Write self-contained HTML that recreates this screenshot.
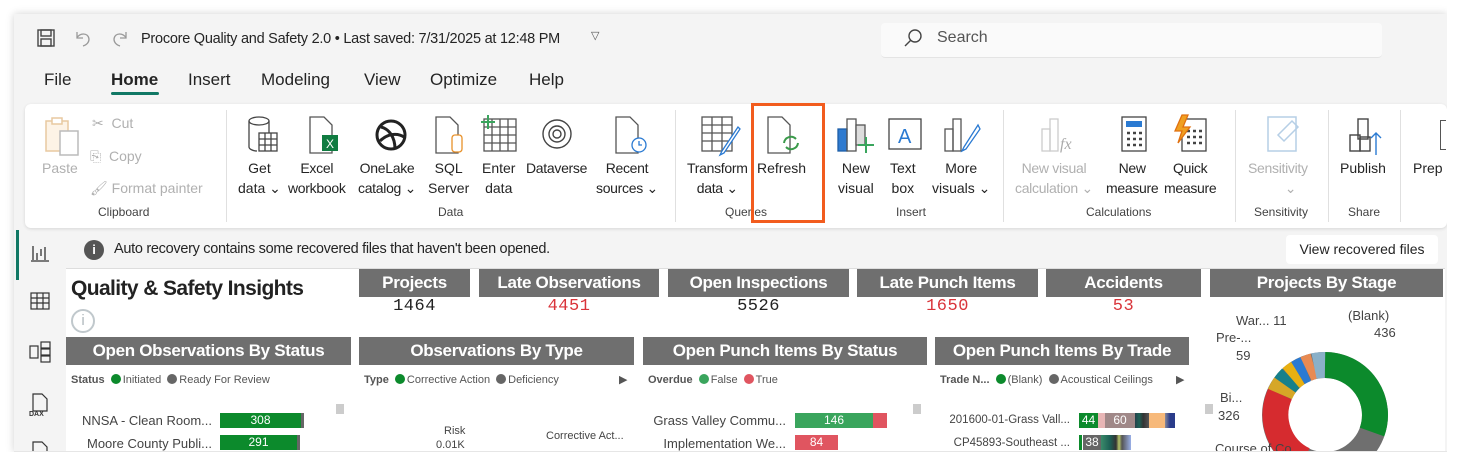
<!DOCTYPE html>
<html><head><meta charset="utf-8"><style>
*{margin:0;padding:0;box-sizing:border-box}
html,body{overflow:hidden}
body{width:1462px;height:466px;background:#fff;font-family:"Liberation Sans",sans-serif;position:relative;color:#242424}
.a{position:absolute}
.win{left:14px;top:14px;width:1433px;height:438px;background:#f4f4f4;box-shadow:0 0 8px rgba(0,0,0,.18);overflow:hidden}
.t{position:absolute;white-space:nowrap}
.rb{font-size:14px;color:#242424;text-align:center;line-height:20px}
.dis{color:#b0b0b0}
.grp{font-size:12px;color:#424242;text-align:center}
.sep{position:absolute;top:110px;width:1px;height:112px;background:#e0e0e0}
.hd{position:absolute;background:#6f6f6f;color:#fff;font-weight:bold;font-size:17px;text-align:center;line-height:28px;height:28px;letter-spacing:-.3px}
.num{position:absolute;font-size:17px;text-align:center;font-family:"Liberation Mono",monospace;letter-spacing:.5px}
.lg{font-size:11px;color:#555}
.dot{display:inline-block;width:10px;height:10px;border-radius:50%;vertical-align:-1px;margin:0 2px 0 3px}
.lbl{font-size:13px;color:#444;text-align:right}
.bar{position:absolute;height:15px;color:#fff;font-size:12px;text-align:center;line-height:15px}
</style></head><body>
<div class="a win"></div>
<svg class="a" style="left:36px;top:28px" width="20" height="20" viewBox="0 0 20 20" fill="none" stroke="#444" stroke-width="1.4"><rect x="2" y="2" width="16" height="16"/><rect x="5" y="2" width="10" height="6"/><rect x="5" y="11" width="10" height="7"/></svg>
<svg class="a" style="left:73px;top:28px" width="20" height="20" viewBox="0 0 20 20" fill="none" stroke="#999" stroke-width="1.3"><path d="M4 4v6h6M4 10c2-5 11-6 12 1 0 4-3 6-6 7"/></svg>
<svg class="a" style="left:110px;top:28px" width="20" height="20" viewBox="0 0 20 20" fill="none" stroke="#999" stroke-width="1.3"><path d="M16 4v6h-6M16 10c-2-5-11-6-12 1 0 4 3 6 6 7"/></svg>
<div class="t" style="left:141px;top:31px;font-size:14.5px;letter-spacing:-.25px">Procore Quality and Safety 2.0 • Last saved: 7/31/2025 at 12:48 PM</div>
<div class="t" style="left:591px;top:29px;font-size:11px;color:#555">▽</div>
<div class="a" style="left:881px;top:23px;width:501px;height:35px;background:#fafafa;border-radius:4px;border-bottom:1px solid #e4e4e4"></div>
<svg class="a" style="left:902px;top:27px" width="22" height="22" viewBox="0 0 22 22" fill="none" stroke="#444" stroke-width="1.4"><circle cx="13" cy="9" r="6"/><path d="M9 13l-6 6"/></svg>
<div class="t" style="left:937px;top:29px;font-size:16px;color:#555">Search</div>
<div class="t" style="left:44px;top:70px;font-size:17px">File</div>
<div class="t" style="left:111px;top:70px;font-size:17px;font-weight:bold;color:#242424">Home</div>
<div class="a" style="left:111px;top:92px;width:48px;height:3px;background:#117865;border-radius:2px"></div>
<div class="t" style="left:188px;top:70px;font-size:17px">Insert</div>
<div class="t" style="left:261px;top:70px;font-size:17px">Modeling</div>
<div class="t" style="left:364px;top:70px;font-size:17px">View</div>
<div class="t" style="left:430px;top:70px;font-size:17px">Optimize</div>
<div class="t" style="left:529px;top:70px;font-size:17px">Help</div>
<div class="a" style="left:25px;top:104px;width:1422px;height:124px;background:#fff;border-radius:6px;box-shadow:0 1px 3px rgba(0,0,0,.12)"></div>
<div class="sep" style="left:226px"></div><div class="sep" style="left:675px"></div><div class="sep" style="left:1003px"></div><div class="sep" style="left:1235px"></div><div class="sep" style="left:1328px"></div><div class="sep" style="left:1400px"></div>
<svg class="a" style="left:42px;top:115px" width="40" height="42" viewBox="0 0 40 42" fill="none" stroke="#e8c9a0" stroke-width="1.5"><rect x="4" y="6" width="22" height="30" fill="#fdf3e6"/><rect x="10" y="3" width="10" height="6" fill="#fff"/><rect x="18" y="16" width="18" height="24" fill="#fff" stroke="#bbb"/></svg>
<div class="t rb dis" style="left:42px;top:158px">Paste</div>
<div class="t" style="left:92px;top:115px;font-size:14px;color:#b0b0b0">✂ &nbsp;Cut</div>
<div class="t" style="left:90px;top:148px;font-size:14px;color:#b0b0b0">⎘ &nbsp;Copy</div>
<div class="t" style="left:90px;top:180px;font-size:14px;color:#b0b0b0">🖌 Format painter</div>
<div class="t grp" style="left:98px;top:205px">Clipboard</div>
<svg class="a" style="left:245px;top:115px" width="36" height="40" viewBox="0 0 36 40" fill="none" stroke="#444" stroke-width="1.3"><ellipse cx="14" cy="6" rx="10" ry="4"/><path d="M4 6v26c0 2 4 4 8 4M24 6v12"/><rect x="14" y="18" width="18" height="18" fill="#fff"/><path d="M14 24h18M14 30h18M20 18v18M26 18v18"/></svg>
<svg class="a" style="left:306px;top:115px" width="36" height="40" viewBox="0 0 36 40" fill="none" stroke="#555" stroke-width="1.3"><path d="M4 2h14l8 8v28H4z"/><rect x="16" y="20" width="16" height="16" fill="#107c41" stroke="none"/><text x="20" y="33" fill="#fff" font-size="12" font-family="Liberation Sans" stroke="none">X</text></svg>
<svg class="a" style="left:372px;top:115px" width="38" height="40" viewBox="0 0 38 40" fill="none" stroke="#222" stroke-width="3"><circle cx="19" cy="20" r="14"/><path d="M9 12c8 2 14 10 14 22M8 26c8-8 18-8 24-4"/></svg>
<svg class="a" style="left:432px;top:115px" width="38" height="40" viewBox="0 0 38 40" fill="none" stroke="#555" stroke-width="1.3"><path d="M4 2h14l8 8v28H4z"/><rect x="20" y="20" width="10" height="17" rx="3" fill="#fff" stroke="#e8912a"/></svg>
<svg class="a" style="left:480px;top:113px" width="38" height="42" viewBox="0 0 38 42" fill="none" stroke="#555" stroke-width="1.3"><rect x="4" y="6" width="32" height="32"/><path d="M4 14h32M4 22h32M4 30h32M12 6v32M20 6v32M28 6v32"/><path d="M8 2v14M1 9h14" stroke="#3aa55d" stroke-width="2"/></svg>
<svg class="a" style="left:538px;top:115px" width="38" height="38" viewBox="0 0 38 38" fill="none" stroke="#444" stroke-width="1.4"><circle cx="19" cy="19" r="14"/><circle cx="19" cy="19" r="8"/><circle cx="19" cy="19" r="4"/></svg>
<svg class="a" style="left:612px;top:115px" width="38" height="40" viewBox="0 0 38 40" fill="none" stroke="#555" stroke-width="1.3"><path d="M4 2h14l8 8v28H4z"/><circle cx="27" cy="30" r="7" fill="#fff" stroke="#2a7ad2"/><path d="M27 26v4h3" stroke="#2a7ad2"/></svg>
<div class="t rb" style="left:238px;top:158px">Get<br>data ⌄</div>
<div class="t rb" style="left:288px;top:158px;letter-spacing:-.3px">Excel<br>workbook</div>
<div class="t rb" style="left:358px;top:158px;letter-spacing:-.3px">OneLake<br>catalog ⌄</div>
<div class="t rb" style="left:428px;top:158px">SQL<br>Server</div>
<div class="t rb" style="left:482px;top:158px">Enter<br>data</div>
<div class="t rb" style="left:526px;top:158px;letter-spacing:-.3px">Dataverse</div>
<div class="t rb" style="left:596px;top:158px;letter-spacing:-.3px">Recent<br>sources ⌄</div>
<div class="t grp" style="left:438px;top:205px">Data</div>
<svg class="a" style="left:700px;top:115px" width="42" height="42" viewBox="0 0 42 42" fill="none" stroke="#555" stroke-width="1.3"><rect x="2" y="2" width="30" height="34"/><path d="M2 10h30M2 18h30M2 26h30M12 2v34M22 2v34"/><path d="M38 12L22 36l-2 4 4-2 16-24z" fill="#fff" stroke="#2a7ad2"/></svg>
<svg class="a" style="left:764px;top:115px" width="40" height="40" viewBox="0 0 40 40" fill="none" stroke="#555" stroke-width="1.3"><path d="M4 2h14l8 8v28H4z"/><path d="M20 28a7 7 0 0 1 12-4M34 28a7 7 0 0 1-12 4" stroke="#3a9a4a" stroke-width="2"/></svg>
<div class="t rb" style="left:687px;top:158px;letter-spacing:-.3px">Transform<br>data ⌄</div>
<div class="t rb" style="left:757px;top:158px">Refresh</div>
<div class="t grp" style="left:725px;top:205px">Queries</div>
<div class="a" style="left:751px;top:103px;width:74px;height:120px;border:3px solid #f25c1e"></div>
<svg class="a" style="left:836px;top:115px" width="40" height="40" viewBox="0 0 40 40" fill="none" stroke="#555" stroke-width="1.3"><rect x="2" y="14" width="9" height="22" fill="#2f7bd0" stroke="#1d5fa8"/><rect x="11" y="4" width="9" height="32"/><rect x="20" y="10" width="9" height="20" fill="#ddd"/><path d="M30 22v16M22 30h16" stroke="#3aa55d" stroke-width="2"/></svg>
<svg class="a" style="left:886px;top:115px" width="40" height="40" viewBox="0 0 40 40" fill="none"><rect x="3" y="4" width="32" height="30" stroke="#444" stroke-width="1.3"/><text x="12" y="28" fill="#2a7ad2" font-size="20" font-family="Liberation Sans">A</text></svg>
<svg class="a" style="left:942px;top:115px" width="40" height="40" viewBox="0 0 40 40" fill="none" stroke="#555" stroke-width="1.3"><rect x="3" y="14" width="8" height="22"/><rect x="11" y="4" width="8" height="32"/><path d="M36 10L22 32l-2 4 4-2 14-20z" fill="#fff" stroke="#2a7ad2"/></svg>
<div class="t rb" style="left:838px;top:158px">New<br>visual</div>
<div class="t rb" style="left:890px;top:158px">Text<br>box</div>
<div class="t rb" style="left:932px;top:158px">More<br>visuals ⌄</div>
<div class="t grp" style="left:896px;top:205px">Insert</div>
<svg class="a" style="left:1040px;top:115px" width="40" height="40" viewBox="0 0 40 40" fill="none" stroke="#ccc" stroke-width="1.3"><rect x="2" y="14" width="8" height="22"/><rect x="10" y="4" width="8" height="32"/><text x="20" y="34" fill="#aaa" stroke="none" font-size="16" font-style="italic" font-family="Liberation Serif">fx</text></svg>
<svg class="a" style="left:1118px;top:115px" width="32" height="40" viewBox="0 0 32 40" fill="none" stroke="#444" stroke-width="1.3"><rect x="4" y="2" width="24" height="34"/><rect x="8" y="6" width="16" height="6" fill="#2a7ad2" stroke="none"/><path d="M9 18h3M15 18h3M21 18h3M9 24h3M15 24h3M21 24h3M9 30h3M15 30h3M21 30h3" stroke-width="2.5"/></svg>
<svg class="a" style="left:1172px;top:113px" width="38" height="42" viewBox="0 0 38 42" fill="none" stroke="#444" stroke-width="1.3"><rect x="10" y="6" width="24" height="32"/><path d="M15 18h3M21 18h3M27 18h3M15 24h3M21 24h3M27 24h3M15 30h3M21 30h3M27 30h3" stroke-width="2.5"/><path d="M10 2L3 18h7l-4 12 12-16h-7l5-12z" fill="#f0a020" stroke="#e07010"/></svg>
<div class="t rb dis" style="left:1015px;top:158px;letter-spacing:-.3px">New visual<br>calculation ⌄</div>
<div class="t rb" style="left:1106px;top:158px;letter-spacing:-.3px">New<br>measure</div>
<div class="t rb" style="left:1164px;top:158px;letter-spacing:-.3px">Quick<br>measure</div>
<div class="t grp" style="left:1086px;top:205px">Calculations</div>
<svg class="a" style="left:1264px;top:113px" width="40" height="42" viewBox="0 0 40 42" fill="none" stroke="#b6cfe6" stroke-width="1.5"><rect x="4" y="4" width="28" height="34"/><path d="M14 22l14-14 6 6-14 14z"/></svg>
<div class="t rb dis" style="left:1248px;top:158px;letter-spacing:-.3px">Sensitivity<br>&nbsp;&nbsp;&nbsp;&nbsp;&nbsp;&nbsp;&nbsp;⌄</div>
<div class="t grp" style="left:1254px;top:205px">Sensitivity</div>
<svg class="a" style="left:1346px;top:115px" width="40" height="42" viewBox="0 0 40 42" fill="none" stroke="#444" stroke-width="1.4"><rect x="4" y="20" width="10" height="16"/><rect x="12" y="4" width="10" height="20"/><rect x="14" y="22" width="10" height="14"/><path d="M30 40V18M25 23l5-5 5 5" stroke="#2a7ad2"/></svg>
<div class="t rb" style="left:1340px;top:158px">Publish</div>
<div class="t grp" style="left:1348px;top:205px">Share</div>
<div class="t rb" style="left:1413px;top:158px">Prep</div>
<div class="a" style="left:1440px;top:120px;width:6px;height:30px;border:1.3px solid #555;border-right:none"></div>
<div class="a" style="left:16px;top:230px;width:3px;height:50px;background:#117865"></div>
<svg class="a" style="left:30px;top:244px" width="20" height="18" viewBox="0 0 20 18" fill="none" stroke="#333" stroke-width="1.3"><path d="M1 17h18M3 2v14M7 9v7M11 5v7M15 3v13"/></svg>
<svg class="a" style="left:30px;top:292px" width="20" height="18" viewBox="0 0 20 18" fill="none" stroke="#333" stroke-width="1.2"><rect x="1" y="1" width="18" height="16"/><path d="M1 6h18M1 11h18M7 1v16M13 1v16"/></svg>
<svg class="a" style="left:28px;top:340px" width="24" height="24" viewBox="0 0 24 24" fill="none" stroke="#333" stroke-width="1.2"><rect x="2" y="6" width="8" height="12"/><rect x="13" y="2" width="9" height="6"/><rect x="13" y="9" width="9" height="6"/><rect x="13" y="16" width="9" height="6"/></svg>
<svg class="a" style="left:28px;top:392px" width="24" height="28" viewBox="0 0 24 28" fill="none" stroke="#333" stroke-width="1.2"><path d="M5 2h9l5 5v12H5z"/><text x="1" y="24" font-size="7" fill="#333" stroke="none" font-family="Liberation Sans" font-weight="bold">DAX</text></svg>
<svg class="a" style="left:30px;top:440px" width="20" height="12" viewBox="0 0 20 12" fill="none" stroke="#333" stroke-width="1.2"><path d="M3 12V2h9l5 5v5"/></svg>
<div class="a" style="left:84px;top:240px;width:20px;height:20px;border-radius:50%;background:#555;color:#fff;font-size:13px;text-align:center;line-height:20px;font-weight:bold">i</div>
<div class="t" style="left:114px;top:241px;font-size:14.5px;letter-spacing:-.3px">Auto recovery contains some recovered files that haven't been opened.</div>
<div class="a" style="left:1286px;top:235px;width:152px;height:29px;background:#fff;border-radius:4px;font-size:14px;text-align:center;line-height:29px">View recovered files</div>
<div class="a" style="left:66px;top:268px;width:1379px;height:184px;background:#fff;border-top:1px solid #ddd"></div>
<div class="t" style="left:71px;top:277px;font-size:21px;font-weight:bold;letter-spacing:-.6px;color:#222">Quality &amp; Safety Insights</div>
<div class="a" style="left:71px;top:309px;width:24px;height:24px;border-radius:50%;border:2px solid #c0c8cc;color:#b0b8bc;font-size:15px;text-align:center;line-height:20px">i</div>
<div class="hd" style="left:359px;top:269px;width:111px">Projects</div>
<div class="hd" style="left:479px;top:269px;width:180px">Late Observations</div>
<div class="hd" style="left:668px;top:269px;width:181px">Open Inspections</div>
<div class="hd" style="left:857px;top:269px;width:181px">Late Punch Items</div>
<div class="hd" style="left:1046px;top:269px;width:155px">Accidents</div>
<div class="hd" style="left:1210px;top:269px;width:233px">Projects By Stage</div>
<div class="num" style="left:359px;top:297px;width:111px;color:#222">1464</div>
<div class="num" style="left:479px;top:297px;width:180px;color:#d9343a">4451</div>
<div class="num" style="left:668px;top:297px;width:181px;color:#222">5526</div>
<div class="num" style="left:857px;top:297px;width:181px;color:#d9343a">1650</div>
<div class="num" style="left:1046px;top:297px;width:155px;color:#d9343a">53</div>
<div class="hd" style="left:66px;top:337px;width:285px">Open Observations By Status</div>
<div class="hd" style="left:359px;top:337px;width:275px">Observations By Type</div>
<div class="hd" style="left:643px;top:337px;width:284px">Open Punch Items By Status</div>
<div class="hd" style="left:935px;top:337px;width:254px">Open Punch Items By Trade</div>
<div class="t lg" style="left:71px;top:374px"><b>Status</b> <span class="dot" style="background:#0c8a2c"></span>Initiated <span class="dot" style="background:#666"></span>Ready For Review</div>
<div class="t lg" style="left:364px;top:374px"><b>Type</b> <span class="dot" style="background:#0c8a2c"></span>Corrective Action <span class="dot" style="background:#666"></span>Deficiency</div>
<div class="t lg" style="left:619px;top:373px">▶</div>
<div class="t lg" style="left:648px;top:374px"><b>Overdue</b> <span class="dot" style="background:#3aa55d"></span>False <span class="dot" style="background:#e05560"></span>True</div>
<div class="t lg" style="left:940px;top:374px"><b>Trade N...</b> <span class="dot" style="background:#0c8a2c"></span>(Blank) <span class="dot" style="background:#666"></span>Acoustical Ceilings</div>
<div class="t lg" style="left:1176px;top:373px">▶</div>
<div class="t lbl" style="left:70px;top:413px;width:142px">NNSA - Clean Room...</div>
<div class="t lbl" style="left:70px;top:436px;width:142px">Moore County Publi...</div>
<div class="bar" style="left:220px;top:413px;width:81px;background:#0c8a2c">308</div><div class="a" style="left:301px;top:413px;width:3px;height:15px;background:#666"></div>
<div class="bar" style="left:220px;top:435px;width:77px;background:#0c8a2c">291</div><div class="a" style="left:297px;top:435px;width:3px;height:15px;background:#666"></div>
<div class="a" style="left:336px;top:404px;width:8px;height:10px;background:#ccc"></div>
<div class="t" style="left:444px;top:425px;font-size:11px;color:#444">Risk</div>
<div class="t" style="left:436px;top:439px;font-size:11px;color:#444">0.01K</div>
<div class="t" style="left:546px;top:430px;font-size:11px;color:#444">Corrective Act...</div>
<div class="t lbl" style="left:640px;top:413px;width:146px">Grass Valley Commu...</div>
<div class="t lbl" style="left:640px;top:436px;width:146px">Implementation We...</div>
<div class="bar" style="left:795px;top:413px;width:78px;background:#3aa55d">146</div><div class="a" style="left:873px;top:413px;width:14px;height:15px;background:#e05560"></div>
<div class="bar" style="left:795px;top:435px;width:43px;background:#e05560">84</div>
<div class="a" style="left:913px;top:404px;width:8px;height:10px;background:#ccc"></div>
<div class="t" style="left:940px;top:414px;width:130px;text-align:right;font-size:11.5px;color:#444">201600-01-Grass Vall...</div>
<div class="t" style="left:940px;top:437px;width:130px;text-align:right;font-size:11.5px;color:#444">CP45893-Southeast ...</div>
<div class="bar" style="left:1079px;top:413px;width:19px;background:#0c8a2c">44</div>
<div class="a" style="left:1098px;top:413px;width:7px;height:15px;background:#e8b5b5"></div>
<div class="bar" style="left:1105px;top:413px;width:30px;background:#a08888">60</div>
<div class="a" style="left:1135px;top:413px;width:14px;height:15px;background:linear-gradient(90deg,#24404a,#1d6055 30%,#333 60%,#555)"></div>
<div class="a" style="left:1149px;top:413px;width:16px;height:15px;background:#f7b97a"></div>
<div class="a" style="left:1165px;top:413px;width:10px;height:15px;background:linear-gradient(90deg,#8a8a9a,#2a3c8a 50%)"></div>
<div class="a" style="left:1079px;top:435px;width:3px;height:15px;background:#0c8a2c"></div>
<div class="bar" style="left:1083px;top:435px;width:18px;background:#666">38</div>
<div class="a" style="left:1101px;top:435px;width:30px;height:15px;background:linear-gradient(90deg,#3a8a6a,#1d6055 30%,#333 50%,#b5c56a 60%,#555 70%,#9ab0e8)"></div>
<div class="a" style="left:1205px;top:404px;width:8px;height:10px;background:#ccc"></div>
<svg class="a" style="left:1255px;top:325px" width="140" height="130" viewBox="0 0 140 130">
<g transform="translate(70,90)" fill="none" stroke-width="26">
<circle r="50" stroke="#6f6f6f"/>
<path d="M0 -50 A50 50 0 0 1 47 17" stroke="#0c8a2c"/>
<path d="M-21 45 A50 50 0 0 1 -45 -21" stroke="#d62b2f"/>
<path d="M-45 -21 A50 50 0 0 1 -40 -30" stroke="#d6a727"/>
<path d="M-40 -30 A50 50 0 0 1 -34 -37" stroke="#17808a"/>
<path d="M-34 -37 A50 50 0 0 1 -27 -42" stroke="#e8b012"/>
<path d="M-27 -42 A50 50 0 0 1 -19 -46" stroke="#2a7ad2"/>
<path d="M-19 -46 A50 50 0 0 1 -11 -49" stroke="#e88a52"/>
<path d="M-11 -49 A50 50 0 0 1 0 -50" stroke="#8ab0c8"/>
</g></svg>
<div class="t" style="left:1348px;top:308px;font-size:13px;color:#444">(Blank)</div>
<div class="t" style="left:1374px;top:325px;font-size:13px;color:#444">436</div>
<div class="t" style="left:1236px;top:313px;font-size:13px;color:#444">War... 11</div>
<div class="t" style="left:1216px;top:330px;font-size:13px;color:#444">Pre-...</div>
<div class="t" style="left:1236px;top:348px;font-size:13px;color:#444">59</div>
<div class="t" style="left:1220px;top:390px;font-size:13px;color:#444">Bi...</div>
<div class="t" style="left:1218px;top:408px;font-size:13px;color:#444">326</div>
<div class="t" style="left:1215px;top:441px;font-size:13px;color:#444">Course of Co...</div>
<div class="a" style="left:0;top:452px;width:1462px;height:14px;background:#fff"></div>
<div class="a" style="left:1447px;top:0;width:15px;height:466px;background:#fff"></div>
<div class="a" style="left:14px;top:451px;width:1433px;height:1px;background:#e6e6e6"></div>
</body></html>
